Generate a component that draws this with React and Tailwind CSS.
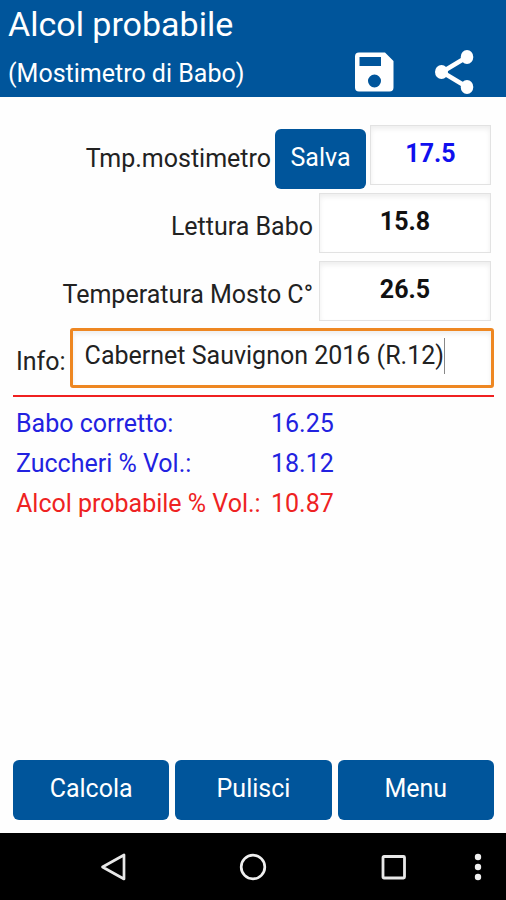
import React from "react";

const results = [
  { label: "Babo corretto:", value: "16.25", color: "text-[#2222e0]" },
  { label: "Zuccheri % Vol.:", value: "18.12", color: "text-[#2222e0]" },
  { label: "Alcol probabile % Vol.:", value: "10.87", color: "text-[#ee2222]" },
];

const actions = ["Calcola", "Pulisci", "Menu"];

const fieldClass =
  "h-[60px] min-w-0 border border-[#e2e2e2] bg-white pb-1 text-center font-bold shadow-[inset_0_3px_5px_rgba(0,0,0,0.07)] outline-none";

const buttonClass = "h-[60px] rounded-md bg-[#00559b] pb-[2px] text-white";

const SaveIcon = () => (
  <svg viewBox="0 0 40 40" className="h-10 w-10" fill="#fff">
    <path
      fillRule="evenodd"
      d="M5 .5H31L39.5 9V35.500a4 4 0 0 1-4 4H5a4 4 0 0 1-4-4V4.500a4 4 0 0 1 4-4ZM5.500 5V14H27V5ZM20.500 22.500a6.500 6.500 0 1 0 0 13a6.500 6.500 0 1 0 0-13Z"
    />
  </svg>
);

const ShareIcon = () => (
  <svg viewBox="0 0 40 46" className="h-[46px] w-10" fill="#fff">
    <path d="M33 8 8 23 33 38" fill="none" stroke="#fff" strokeWidth="4.500" />
    <ellipse cx="33" cy="8" rx="6.300" ry="7" />
    <ellipse cx="7.500" cy="23" rx="6.500" ry="7" />
    <ellipse cx="33" cy="38" rx="6.300" ry="7" />
  </svg>
);

const Header = () => (
  <header className="bg-[#00559b] px-2 text-white">
    <h1 className="pt-[2px] text-[34px] leading-[45px]">Alcol probabile</h1>
    <div className="flex h-[50px] items-center justify-between pr-6">
      <h2 className="pt-1">(Mostimetro di Babo)</h2>
      <div className="flex items-center gap-10">
        <button aria-label="Salva">
          <SaveIcon />
        </button>
        <button aria-label="Condividi">
          <ShareIcon />
        </button>
      </div>
    </div>
  </header>
);

const NavBar = () => (
  <nav className="grid h-[67px] grid-cols-[1fr_140px_140px_140px_1fr] items-center bg-black">
    <button aria-label="Indietro" className="col-start-2 justify-self-center">
      <svg viewBox="0 0 26 28" className="h-7 w-[26px]" fill="none">
        <path
          d="M24 2V26L2.500 14Z"
          stroke="#e8e8e8"
          strokeWidth="2.700"
          strokeLinejoin="round"
        />
      </svg>
    </button>
    <button aria-label="Home" className="justify-self-center">
      <svg viewBox="0 0 28 28" className="h-7 w-7" fill="none">
        <circle cx="14" cy="14" r="11.800" stroke="#f0f0f0" strokeWidth="2.700" />
      </svg>
    </button>
    <button aria-label="Recenti" className="justify-self-center">
      <svg viewBox="0 0 26 26" className="h-[26px] w-[26px]" fill="none">
        <rect x="3" y="2.500" width="21.500" height="21.500" rx="1" stroke="#e8e8e8" strokeWidth="2.800" />
      </svg>
    </button>
    <button aria-label="Altro" className="justify-self-end pr-6">
      <svg viewBox="0 0 8 28" className="h-7 w-2" fill="#f0f0f0">
        <circle cx="4" cy="4" r="3.200" />
        <circle cx="4" cy="14" r="3.200" />
        <circle cx="4" cy="24" r="3.200" />
      </svg>
    </button>
  </nav>
);

const App = () => {
  return (
    <div className="flex min-h-screen flex-col bg-[#fefefe] font-['Roboto',sans-serif] text-[25px] text-[#222]">
      <Header />

      <main className="flex flex-1 flex-col px-3 pt-7 pl-[13px]">
        <div className="flex flex-col gap-2 pr-[3px]">
          <div className="flex items-center justify-end gap-1">
            <label htmlFor="tmp" className="pt-2">
              Tmp.mostimetro
            </label>
            <button className={`${buttonClass} mt-1 -mb-1 w-[91px]`}>Salva</button>
            <input
              id="tmp"
              defaultValue="17.5"
              className={`${fieldClass} w-[121px] text-[#1010ee]`}
            />
          </div>
          <div className="flex items-center justify-end gap-[6px]">
            <label htmlFor="babo" className="pt-2">
              Lettura Babo
            </label>
            <input
              id="babo"
              defaultValue="15.8"
              className={`${fieldClass} w-[172px] text-[#111]`}
            />
          </div>
          <div className="flex items-center justify-end gap-[6px]">
            <label htmlFor="mosto" className="pt-2">
              Temperatura Mosto C°
            </label>
            <input
              id="mosto"
              defaultValue="26.5"
              className={`${fieldClass} w-[172px] text-[#111]`}
            />
          </div>
        </div>

        <div className="mt-[7px] flex items-center gap-1 pl-[3px]">
          <label htmlFor="info" className="pt-2">
            Info:
          </label>
          {/* Focused field with its caret */}
          <div className="flex h-[60px] min-w-0 flex-1 items-center rounded-[3px] border-3 border-[#ee8722] bg-white pb-1 pl-3 shadow-[inset_0_3px_5px_rgba(0,0,0,0.07)]">
            <input
              id="info"
              defaultValue="Cabernet Sauvignon 2016 (R.12)"
              className="field-sizing-content min-w-0 outline-none"
            />
            <span className="h-9 w-px shrink-0 bg-[#888]" />
          </div>
        </div>

        <hr className="mt-[7px] border-t-2 border-[#f02020]" />

        <dl className="pt-[7px] pl-[3px]">
          {results.map((row) => (
            <div key={row.label} className={`flex h-10 items-center ${row.color}`}>
              <dt className="w-[255px] whitespace-nowrap">{row.label}</dt>
              <dd>{row.value}</dd>
            </div>
          ))}
        </dl>

        <div className="mt-auto mb-[13px] grid grid-cols-3 gap-[6px]">
          {actions.map((label) => (
            <button key={label} className={buttonClass}>
              {label}
            </button>
          ))}
        </div>
      </main>

      <NavBar />
    </div>
  );
};

export default App;
